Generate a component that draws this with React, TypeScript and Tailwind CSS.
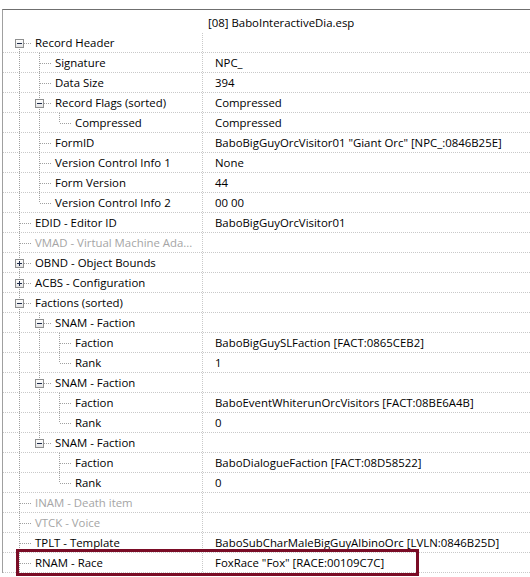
type Conn = "first" | "tee" | "last"

interface RowData {
    label: string,
    value?: string,
    guides: string,
    conn: Conn,
    exp?: "-" | "+",
    dim?: boolean,
    marked?: boolean
}

const rows: RowData[] = [
    { label: "Record Header", guides: "", conn: "first", exp: "-" },
    { label: "Signature", value: "NPC_", guides: "p", conn: "tee" },
    { label: "Data Size", value: "394", guides: "p", conn: "tee" },
    { label: "Record Flags (sorted)", value: "Compressed", guides: "p", conn: "tee", exp: "-" },
    { label: "Compressed", value: "Compressed", guides: "pp", conn: "last" },
    { label: "FormID", value: "BaboBigGuyOrcVisitor01 \"Giant Orc\" [NPC_:0846B25E]", guides: "p", conn: "tee" },
    { label: "Version Control Info 1", value: "None", guides: "p", conn: "tee" },
    { label: "Form Version", value: "44", guides: "p", conn: "tee" },
    { label: "Version Control Info 2", value: "00 00", guides: "p", conn: "last" },
    { label: "EDID - Editor ID", value: "BaboBigGuyOrcVisitor01", guides: "", conn: "tee" },
    { label: "VMAD - Virtual Machine Ada...", guides: "", conn: "tee", dim: true },
    { label: "OBND - Object Bounds", guides: "", conn: "tee", exp: "+" },
    { label: "ACBS - Configuration", guides: "", conn: "tee", exp: "+" },
    { label: "Factions (sorted)", guides: "", conn: "tee", exp: "-" },
    { label: "SNAM - Faction", guides: "p", conn: "tee", exp: "-" },
    { label: "Faction", value: "BaboBigGuySLFaction [FACT:0865CEB2]", guides: "pp", conn: "tee" },
    { label: "Rank", value: "1", guides: "pp", conn: "last" },
    { label: "SNAM - Faction", guides: "p", conn: "tee", exp: "-" },
    { label: "Faction", value: "BaboEventWhiterunOrcVisitors [FACT:08BE6A4B]", guides: "pp", conn: "tee" },
    { label: "Rank", value: "0", guides: "pp", conn: "last" },
    { label: "SNAM - Faction", guides: "p", conn: "last", exp: "-" },
    { label: "Faction", value: "BaboDialogueFaction [FACT:08D58522]", guides: "p ", conn: "tee" },
    { label: "Rank", value: "0", guides: "p ", conn: "last" },
    { label: "INAM - Death item", guides: "", conn: "tee", dim: true },
    { label: "VTCK - Voice", guides: "", conn: "tee", dim: true },
    { label: "TPLT - Template", value: "BaboSubCharMaleBigGuyAlbinoOrc [LVLN:0846B25D]", guides: "", conn: "tee" },
    { label: "RNAM - Race", value: "FoxRace \"Fox\" [RACE:00109C7C]", guides: "", conn: "tee", marked: true },
]

const dots = "1 1"
const lineColor = "#a0a0a0"

function Guide({ on }: { on: boolean }) {
    return (
        <svg width="20" height="19" className="shrink-0">
            {on && <line x1="10.5" y1="0" x2="10.5" y2="19" stroke={lineColor} strokeDasharray={dots} />}
        </svg>
    )
}

function Connector({ conn, exp }: { conn: Conn, exp?: "-" | "+" }) {
    const top = conn === "first" ? 10 : 0
    const bottom = conn === "last" ? 10 : 19
    return (
        <svg width="22" height="19" className="shrink-0">
            <line x1="10.5" y1={top} x2="10.5" y2={bottom} stroke={lineColor} strokeDasharray={dots} />
            <line x1={exp ? 15 : 11} y1="10.5" x2="22" y2="10.5" stroke={lineColor} strokeDasharray={dots} />
            {exp && (
                <g>
                    <defs>
                        <linearGradient id="bx" x1="0" y1="0" x2="0" y2="1">
                            <stop offset="0" stopColor="#ffffff" />
                            <stop offset="1" stopColor="#e2e2e2" />
                        </linearGradient>
                    </defs>
                    <rect x="6.5" y="6.5" width="8" height="8" fill="url(#bx)" stroke="#8e8f8f" />
                    <line x1="8" y1="10.5" x2="13" y2="10.5" stroke="#1c2a49" />
                    {exp === "+" && <line x1="10.5" y1="8" x2="10.5" y2="13" stroke="#1c2a49" />}
                </g>
            )}
        </svg>
    )
}

function TreeRow({ label, value, guides, conn, exp, dim, marked }: RowData) {
    return (
        <div className="relative flex h-5 border-b border-dotted border-[#c9c9c9]">
            <div className="flex w-[199px] shrink-0 items-start overflow-hidden pl-[6px]">
                {guides.split("").map((g, i) => <Guide key={i} on={g === "p"} />)}
                <Connector conn={conn} exp={exp} />
                <span className={"ml-[4px] whitespace-nowrap leading-[20px] " + (dim ? "text-[#a5a5a5]" : "text-black")}>
                    {label}
                </span>
            </div>
            <div className="w-px shrink-0 border-l border-dotted border-[#c9c9c9]" />
            <div className="whitespace-nowrap pl-3 leading-[20px] text-black">{value}</div>
            {marked && (
                <div className="absolute left-[13px] top-[-4px] h-[27px] w-[403px] border-[3px] border-[#7a0c26]" />
            )}
        </div>
    )
}

export default function App() {
    return (
        <div className="h-[577px] w-[530px] overflow-hidden bg-white pt-[9px] text-[11.4px] font-['Open_Sans',Arial,sans-serif]">
            <div className="ml-[2px] border-l border-t border-l-[#a0a0a0] border-t-[#6f6f6f]">
                <div className="flex h-[23px]">
                    <div className="w-[200px] shrink-0" />
                    <div className="pl-[5px] pt-[5px] leading-[16px] text-black">[08] BaboInteractiveDia.esp</div>
                </div>
                {rows.map((r, i) => <TreeRow key={i} {...r} />)}
            </div>
        </div>
    )
}
